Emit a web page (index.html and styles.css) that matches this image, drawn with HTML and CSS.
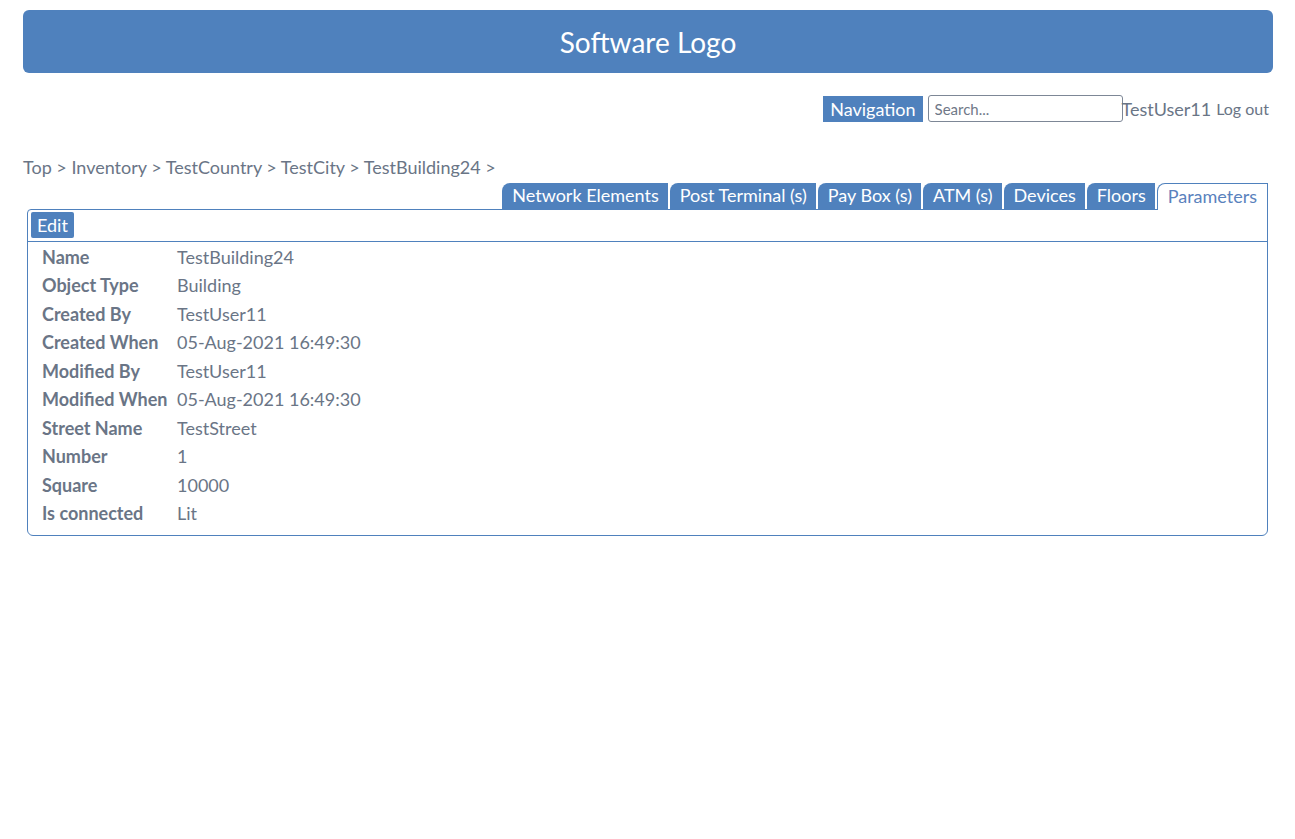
FILE: index.html
```html
<!DOCTYPE html>
<html>
<head>
<meta charset="utf-8">
<title>Building</title>
<link rel="stylesheet" href="styles.css">
</head>
<body>
<header class="logo-bar">Software Logo</header>
<div class="user-bar">
  <span class="nav-btn">Navigation</span>
  <input class="search" type="text" placeholder="Search...">
  <span class="user">TestUser11</span>
  <span class="logout">Log out</span>
</div>
<div class="crumbs">Top &gt; Inventory &gt; TestCountry &gt; TestCity &gt; TestBuilding24 &gt;</div>
<div class="tabs">
  <span class="tab">Network Elements</span>
  <span class="tab">Post Terminal (s)</span>
  <span class="tab">Pay Box (s)</span>
  <span class="tab">ATM (s)</span>
  <span class="tab">Devices</span>
  <span class="tab">Floors</span>
  <span class="tab active">Parameters</span>
</div>
<section class="panel">
  <div class="toolbar"><span class="edit-btn">Edit</span></div>
  <div class="props">
    <div class="label">Name</div><div class="value">TestBuilding24</div>
    <div class="label">Object Type</div><div class="value">Building</div>
    <div class="label">Created By</div><div class="value">TestUser11</div>
    <div class="label">Created When</div><div class="value">05-Aug-2021 16:49:30</div>
    <div class="label">Modified By</div><div class="value">TestUser11</div>
    <div class="label">Modified When</div><div class="value">05-Aug-2021 16:49:30</div>
    <div class="label">Street Name</div><div class="value">TestStreet</div>
    <div class="label">Number</div><div class="value">1</div>
    <div class="label">Square</div><div class="value">10000</div>
    <div class="label">Is connected</div><div class="value">Lit</div>
  </div>
</section>
</body>
</html>
```
FILE: styles.css
```css
body {
  margin: 0;
  padding: 10px 22px 0 23px;
  font-family: Lato, "Open Sans", sans-serif;
  color: #6a7586;
  background: #fff;
}
.logo-bar {
  height: 63px;
  background: #4f81bd;
  border-radius: 6px;
  color: #fff;
  font-size: 28px;
  display: flex;
  align-items: center;
  justify-content: center;
}
.user-bar {
  display: flex;
  justify-content: flex-end;
  align-items: center;
  margin-top: 22px;
  padding-right: 4px;
  height: 27px;
}
.nav-btn {
  background: #4f81bd;
  color: #fff;
  font-size: 18px;
  height: 26px;
  line-height: 26px;
  padding: 0 7px;
  margin-right: 5px;
}
.search {
  width: 195px;
  height: 27px;
  box-sizing: border-box;
  border: 1px solid #7d8796;
  border-radius: 3px;
  padding: 0 6px;
  font-family: inherit;
  font-size: 15px;
  color: #6a7586;
}
.search::placeholder { color: #6f7887; }
.user { font-size: 18px; margin-left: -1px; }
.logout { font-size: 16px; margin-left: 5px; }
.crumbs {
  margin-top: 34px;
  font-size: 18px;
  line-height: 22px;
}
.tabs {
  display: flex;
  justify-content: flex-end;
  gap: 2px;
  margin-top: 5px;
  padding-right: 5px;
  height: 26px;
  align-items: flex-end;
}
.tab {
  background: #4f81bd;
  color: #fff;
  font-size: 18px;
  height: 26px;
  line-height: 25px;
  padding: 0 9px 0 10px;
  border-top-left-radius: 8px;
  box-sizing: border-box;
}
.tab.active {
  background: #fff;
  color: #5a82bd;
  border: 1px solid #4f81bd;
  border-bottom: none;
  height: 27px;
  margin-bottom: -1px;
  padding: 0 10px;
  position: relative;
  z-index: 1;
}
.panel {
  margin-left: 4px;
  margin-right: 5px;
  border: 1px solid #4f81bd;
  border-radius: 4px 0 6px 6px;
  height: 327px;
  box-sizing: border-box;
}
.toolbar {
  padding: 2px 3px;
  border-bottom: 1px solid #4f81bd;
  height: 32px;
  box-sizing: border-box;
}
.edit-btn {
  display: inline-block;
  background: #4f81bd;
  color: #fff;
  font-size: 18px;
  height: 26px;
  line-height: 26px;
  padding: 0 6px;
  border-radius: 2px;
}
.props {
  display: grid;
  grid-template-columns: 135px auto;
  justify-content: start;
  padding: 1px 0 0 14px;
  font-size: 18px;
  line-height: 28.45px;
}
.label { font-weight: bold; }
```
